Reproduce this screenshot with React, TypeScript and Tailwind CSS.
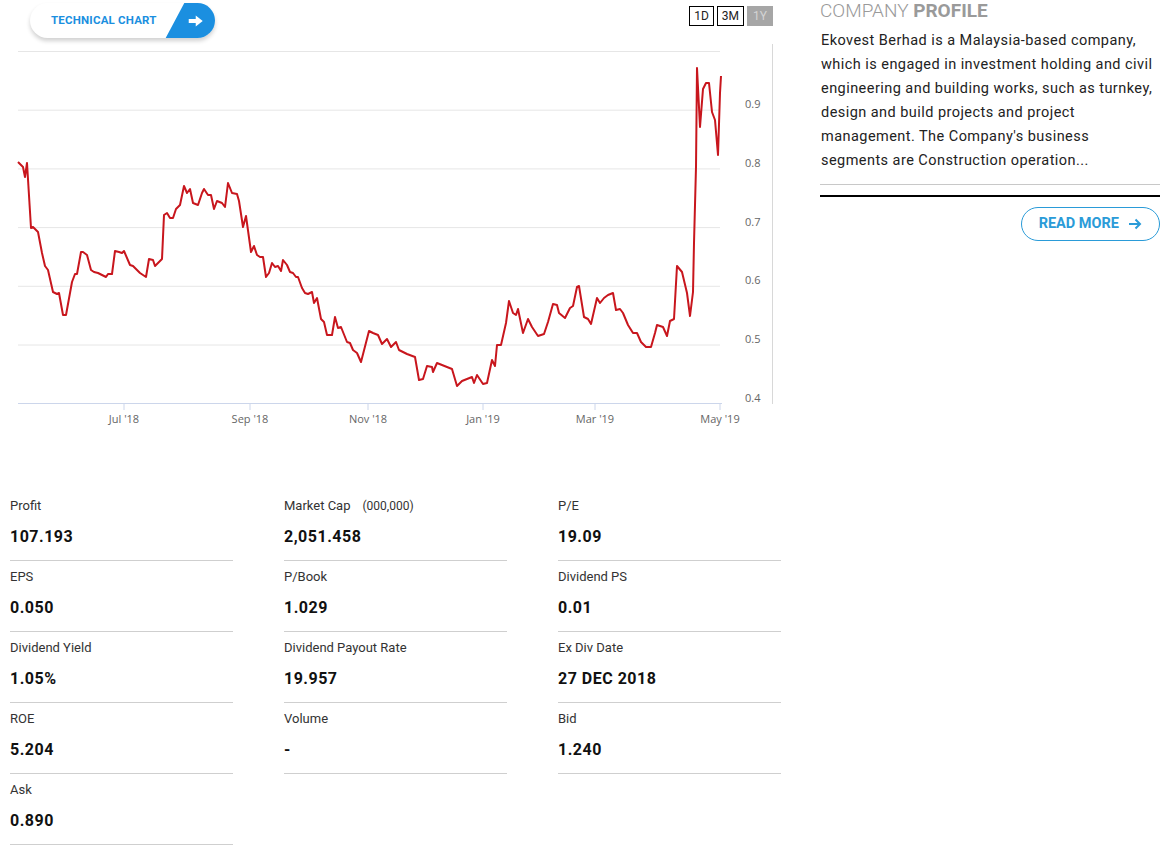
import React from "react";

const PTS: [number, number][] = [
  [18,162],[23,167],[25,177],[27,163],[31,228],[33,227],[38,232],[42,253],[45,266],[48,270],[53,292],[57,294],[59,293],[63,315],[66,315],[72,282],[75,274],[77,274],[81,252],[83,252],[87,255],[91,270],[94,272],[98,273],[102,275],[106,277],[108,274],[112,274],[115,251],[119,252],[122,253],[124,251],[130,265],[133,266],[140,273],[146,277],[149,259],[153,260],[155,266],[159,262],[162,259],[164,215],[167,213],[170,218],[173,218],[176,209],[180,205],[184,186],[187,193],[190,189],[193,203],[198,205],[202,193],[204,189],[208,195],[211,195],[214,209],[217,201],[222,203],[225,207],[228,183],[232,193],[237,194],[239,201],[243,227],[246,216],[251,252],[254,246],[257,255],[260,257],[263,257],[266,277],[269,273],[272,263],[275,267],[278,266],[281,271],[283,260],[287,265],[290,272],[293,273],[296,277],[298,277],[302,288],[305,293],[308,294],[312,292],[314,303],[317,298],[321,319],[324,322],[327,335],[332,335],[335,317],[338,328],[341,327],[347,342],[350,343],[353,350],[357,353],[361,362],[369,331],[373,333],[378,335],[382,344],[387,339],[391,347],[396,342],[399,350],
  [407,354],[415,357],[419,380],[423,379],[427,366],[432,367],[433,372],[437,363],[442,365],[447,367],[452,369],[457,386],[462,381],[467,379],[472,377],[474,383],[477,375],[483,384],[487,383],[492,360],[495,366],[497,345],[501,345],[506,323],[509,301],[513,313],[516,315],[518,309],[523,333],[528,319],[532,327],[538,336],[544,334],[548,322],[553,304],[557,305],[559,313],[565,318],[570,308],[573,306],[577,287],[579,286],[584,317],[588,319],[591,324],[597,298],[600,303],[604,298],[608,295],[613,293],[616,310],[620,309],[623,313],[628,325],[633,333],[637,333],[641,342],[646,347],[651,347],[655,333],[657,325],[663,327],[667,336],[670,321],[674,319],[677,266],[682,272],[687,293],[690,316],[693,292],[694,243],[696,167],[697,68],[700,127],[703,89],[706,83],[709,83],[712,112],[715,120],[718,155],[720,93],[721,76],
];

const Y_TICKS = [
  { v: "0.9", y: 110.2 },
  { v: "0.8", y: 168.9 },
  { v: "0.7", y: 227.6 },
  { v: "0.6", y: 286.3 },
  { v: "0.5", y: 345 },
  { v: "0.4", y: 403.7 },
];

const X_TICKS = [
  { t: "Jul '18", x: 124 },
  { t: "Sep '18", x: 250 },
  { t: "Nov '18", x: 368 },
  { t: "Jan '19", x: 483 },
  { t: "Mar '19", x: 595 },
  { t: "May '19", x: 720 },
];

const STATS = [
  { label: "Profit", value: "107.193" },
  { label: "Market Cap", note: "(000,000)", value: "2,051.458" },
  { label: "P/E", value: "19.09" },
  { label: "EPS", value: "0.050" },
  { label: "P/Book", value: "1.029" },
  { label: "Dividend PS", value: "0.01" },
  { label: "Dividend Yield", value: "1.05%" },
  { label: "Dividend Payout Rate", value: "19.957" },
  { label: "Ex Div Date", value: "27 DEC 2018" },
  { label: "ROE", value: "5.204" },
  { label: "Volume", value: "-" },
  { label: "Bid", value: "1.240" },
  { label: "Ask", value: "0.890" },
];

const PROFILE_LINES = [
  "Ekovest Berhad is a Malaysia-based company,",
  "which is engaged in investment holding and civil",
  "engineering and building works, such as turnkey,",
  "design and build projects and project",
  "management. The Company's business",
  "segments are Construction operation...",
];

function PriceChart() {
  const line = PTS.map((p) => p.join(",")).join(" ");
  return (
    <svg width={780} height={396} viewBox="0 44 780 396" className="block">
      <line x1={18} y1={51.5} x2={720} y2={51.5} stroke="#e6e6e6" />
      {Y_TICKS.slice(0, 5).map((t) => (
        <line key={t.v} x1={18} y1={t.y} x2={720} y2={t.y} stroke="#e6e6e6" />
      ))}
      <line x1={18} y1={403.5} x2={722} y2={403.5} stroke="#ccd6eb" />
      {X_TICKS.map((t) => (
        <g key={t.t}>
          <line x1={t.x} y1={404} x2={t.x} y2={410} stroke="#ccd6eb" />
          <text x={t.x} y={423} textAnchor="middle" fontSize={11} fill="#666" fontFamily="'Open Sans', sans-serif">
            {t.t}
          </text>
        </g>
      ))}
      {Y_TICKS.map((t) => (
        <text key={t.v} x={745} y={t.y - 2} fontSize={11} fill="#666" fontFamily="'Open Sans', sans-serif">
          {t.v}
        </text>
      ))}
      <line x1={772.5} y1={44} x2={772.5} y2={404} stroke="#d8d8d8" />
      <polyline points={line} fill="none" stroke="#c8161d" strokeWidth={2} strokeLinejoin="round" />
    </svg>
  );
}

function TechButton() {
  return (
    <div className="ml-[30px] mt-[3px] flex h-[35px] w-[185px] items-center overflow-hidden rounded-full bg-white shadow-[0_3px_4px_rgba(0,0,0,0.18)]">
      <span className="pl-[21px] text-[11.5px] font-bold tracking-[0.2px] text-[#1b8fe0]">TECHNICAL CHART</span>
      <div className="ml-auto mr-[-12px] flex h-full w-[52px] -skew-x-[28deg] items-center justify-center bg-[#1b8fe0]">
        <svg width="16" height="12" viewBox="0 0 16 12" className="skew-x-[28deg] mr-[10px]">
          <path d="M1 4h7V0.5L15 6l-7 5.5V8H1z" fill="#fff" />
        </svg>
      </div>
    </div>
  );
}

export default function App() {
  return (
    <div className="flex h-[851px] w-[1165px] overflow-hidden bg-white font-['Roboto',sans-serif] text-[#222]">
      <div className="w-[780px] shrink-0">
        <div className="flex h-[44px] items-start justify-between">
          <TechButton />
          <div className="mr-[7px] mt-[6px] flex gap-[3px] text-[12px] leading-[18px]">
            <span className="border border-black px-[4px]">1D</span>
            <span className="border border-black px-[4px]">3M</span>
            <span className="border border-[#a6a6a6] bg-[#a6a6a6] px-[5px] text-[#d4d4d4]">1Y</span>
          </div>
        </div>
        <PriceChart />
        <div className="mt-[50px] grid grid-cols-[223px_223px_223px] gap-x-[51px] pl-[10px]">
          {STATS.map((s) => (
            <div key={s.label} className="border-b border-[#cfcfcf] pb-[11px] pt-[7px]">
              <div className="text-[13px] leading-[18px] text-[#333]">
                {s.label}
                {s.note && <span className="ml-[12px] text-[12px]">{s.note}</span>}
              </div>
              <div className="mt-[10px] text-[16px] font-bold leading-[24px] tracking-[0.5px] text-[#111]">{s.value}</div>
            </div>
          ))}
        </div>
      </div>
      <div className="ml-[40px] w-[340px]">
        <h2 className="mt-[1px] text-[19px] leading-[19px] text-[#9a9a9a]">
          <span className="font-light">COMPANY </span>
          <span className="font-bold">PROFILE</span>
        </h2>
        <div className="mt-[9px] pl-px text-[14.5px] leading-[24px] tracking-[0.45px] text-[#222]">
          {PROFILE_LINES.map((l) => (
            <div key={l} className="whitespace-nowrap">
              {l}
            </div>
          ))}
        </div>
        <div className="mt-[11px] h-px bg-[#c8c8c8]" />
        <div className="mt-[10px] h-[2px] bg-black" />
        <div className="mt-[10px] flex justify-end">
          <button className="flex h-[34px] items-center gap-[9px] rounded-full border border-[#2a9bd8] px-[17px] text-[14.5px] font-bold text-[#2a9bd8]">
            READ MORE
            <svg width="14" height="12" viewBox="0 0 14 12">
              <path d="M1 6h11M7.5 1.5L12 6l-4.5 4.5" fill="none" stroke="#2a9bd8" strokeWidth="2" />
            </svg>
          </button>
        </div>
      </div>
    </div>
  );
}
